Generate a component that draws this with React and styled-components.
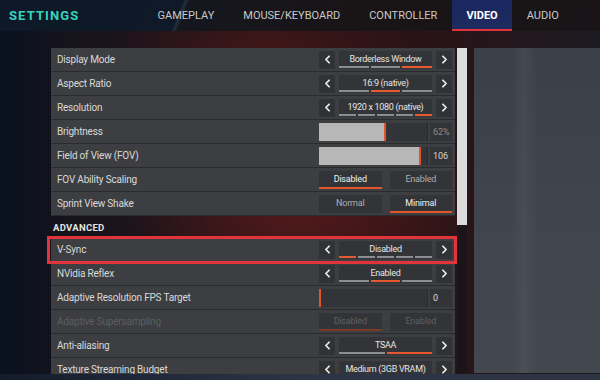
import React from "react";
import styled, { createGlobalStyle, css } from "styled-components";
import { ChevronLeft, ChevronRight } from "lucide-react";

const GlobalStyle = createGlobalStyle`
  html, body {
    margin: 0;
    padding: 0;
    background: #0b0f1a;
  }
  * {
    box-sizing: border-box;
  }
`;

const Page = styled.div`
  position: relative;
  width: 600px;
  height: 380px;
  overflow: hidden;
  font-family: Roboto, "Liberation Sans", sans-serif;
  background:
    radial-gradient(ellipse 260px 160px at 300px 200px, rgba(120, 30, 30, 0.55), transparent 70%),
    radial-gradient(ellipse 220px 120px at 260px 60px, rgba(90, 25, 25, 0.5), transparent 70%),
    linear-gradient(90deg, #0a1120 0%, #14131c 10%, #2a1417 45%, #2a1316 70%, #1c1a22 100%);
  display: flex;
  flex-direction: column;
`;

const Header = styled.div`
  height: 31px;
  flex-shrink: 0;
  display: flex;
  align-items: stretch;
  background: linear-gradient(
    112deg,
    #0d1928 0%,
    #0f1927 30%,
    #22303e 30.4%,
    #15171e 31%,
    #191416 60%,
    #181417 100%
  );
`;

const Title = styled.div`
  width: 143px;
  padding-left: 9px;
  display: flex;
  align-items: center;
  color: #36d3bd;
  font-weight: 700;
  font-size: 13px;
  letter-spacing: 1.1px;
`;

const Tab = styled.div`
  position: relative;
  display: flex;
  align-items: center;
  justify-content: center;
  padding: 0 14.5px;
  color: ${(p) => (p.$active ? "#ffffff" : "#c9c9c9")};
  font-size: 11px;
  font-weight: ${(p) => (p.$active ? 700 : 400)};
  letter-spacing: 0;
  ${(p) =>
    p.$active &&
    css`
      background: linear-gradient(180deg, #1b2760 0%, #1d2b5e 100%);
      &::after {
        content: "";
        position: absolute;
        left: 0;
        right: 0;
        bottom: 0;
        height: 2px;
        background: #e2323c;
      }
    `}
`;

const Body = styled.div`
  flex: 1;
  display: flex;
  padding: 17px 0 0 47px;
`;

const List = styled.div`
  width: 410px;
  height: 326px;
  padding: 0 2px 0 4px;
  overflow: hidden;
  display: flex;
  flex-direction: column;
`;

const Row = styled.div`
  position: relative;
  height: 24px;
  flex-shrink: 0;
  display: flex;
  align-items: center;
  justify-content: space-between;
  padding: 0 3px 0 6px;
  background: #3d3e41;
  border-bottom: 1px solid #2b2b2e;
  ${(p) =>
    p.$highlight &&
    css`
      z-index: 1;
      &::before {
        content: "";
        position: absolute;
        left: -4px;
        right: -2px;
        top: -2px;
        bottom: -3px;
        border: 3px solid #e3343b;
        pointer-events: none;
      }
    `}
`;

const Label = styled.div`
  color: ${(p) => (p.$disabled ? "#5c5d60" : "#d9d9d9")};
  font-size: 10px;
  letter-spacing: -0.2px;
`;

const Section = styled.div`
  height: 22px;
  flex-shrink: 0;
  display: flex;
  align-items: center;
  color: #e4e4e4;
  font-size: 9.5px;
  font-weight: 700;
  letter-spacing: 0.3px;
  padding-left: 2px;
`;

const Control = styled.div`
  width: 133px;
  height: 18px;
  display: flex;
  gap: ${(p) => p.$gap ?? 4}px;
`;

const ArrowBox = styled.div`
  width: 16px;
  flex-shrink: 0;
  background: #313236;
  display: flex;
  align-items: center;
  justify-content: center;
  color: #eeeeee;
`;

const ValueBox = styled.div`
  position: relative;
  flex: 1;
  background: #333438;
  display: flex;
  align-items: center;
  justify-content: center;
  padding-bottom: 2px;
  color: #e6e6e6;
  font-size: 9px;
  letter-spacing: -0.3px;
`;

const Segments = styled.div`
  position: absolute;
  left: 0;
  right: 0;
  bottom: 1px;
  display: flex;
  gap: 2px;
`;

const Segment = styled.div`
  flex: 1;
  height: 1.5px;
  background: ${(p) => (p.$on ? "#e55a2f" : "#8d8e91")};
`;

const Track = styled.div`
  flex: 1;
  display: flex;
  background: #333437;
  border-right: 1px solid #2a2a2d;
`;

const Fill = styled.div`
  height: 100%;
  background: #b7b7b7;
  border-right: 2px solid #e2542a;
  min-width: 2px;
`;

const SliderValue = styled.div`
  width: 22px;
  flex-shrink: 0;
  background: #333437;
  display: flex;
  align-items: center;
  padding-left: 3px;
  color: ${(p) => (p.$dim ? "#8b8b8e" : "#d6d6d6")};
  font-size: 9px;
`;

const ToggleGroup = styled.div`
  width: 133px;
  height: 18px;
  display: flex;
  gap: 8px;
`;

const ToggleButton = styled.div`
  flex: 1;
  display: flex;
  align-items: center;
  justify-content: center;
  background: #333437;
  font-size: 9px;
  letter-spacing: -0.2px;
  color: ${(p) =>
    p.$disabled ? "#5f5f62" : p.$on ? "#f0f0f0" : "#aeaeb1"};
  border-bottom: 2px solid
    ${(p) =>
      p.$on ? (p.$disabled ? "#7a3a26" : "#e2542a") : "transparent"};
`;

const Scrollbar = styled.div`
  width: 10px;
  height: 325px;
  background: #1b1418;
  display: flex;
  flex-direction: column;
`;

const Thumb = styled.div`
  height: 177px;
  background: #dcdcdd;
`;

const SidePanel = styled.div`
  margin-left: 7px;
  flex: 1;
  height: 325px;
  background:
    linear-gradient(90deg, transparent 30%, rgba(120, 135, 160, 0.12) 40%, transparent 50%),
    linear-gradient(180deg, #3b4048 0%, #41464e 60%, #43474e 100%);
`;

const BottomStrip = styled.div`
  position: absolute;
  left: 0;
  right: 0;
  bottom: 0;
  height: 6px;
  background: linear-gradient(90deg, #141c2c, #2c3446 50%, #2e3444);
`;

const Selector = ({ value, count, active }) => (
  <Control>
    <ArrowBox>
      <ChevronLeft size={13} strokeWidth={3.2} />
    </ArrowBox>
    <ValueBox>
      {value}
      <Segments>
        {Array.from({ length: count }).map((_, i) => (
          <Segment key={i} $on={i === active} />
        ))}
      </Segments>
    </ValueBox>
    <ArrowBox>
      <ChevronRight size={13} strokeWidth={3.2} />
    </ArrowBox>
  </Control>
);

const Slider = ({ percent, value, dim }) => (
  <Control $gap={2}>
    <Track>
      <Fill style={{ width: `${percent}%` }} />
    </Track>
    <SliderValue $dim={dim}>{value}</SliderValue>
  </Control>
);

const Toggle = ({ options, active, disabled }) => (
  <ToggleGroup>
    {options.map((o, i) => (
      <ToggleButton key={o} $on={i === active} $disabled={disabled}>
        {o}
      </ToggleButton>
    ))}
  </ToggleGroup>
);

const basic = [
  { label: "Display Mode", kind: "select", value: "Borderless Window", count: 3, active: 2 },
  { label: "Aspect Ratio", kind: "select", value: "16:9 (native)", count: 3, active: 1 },
  { label: "Resolution", kind: "select", value: "1920 x 1080 (native)", count: 5, active: 4 },
  { label: "Brightness", kind: "slider", percent: 62, value: "62%", dim: true },
  { label: "Field of View (FOV)", kind: "slider", percent: 94, value: "106" },
  { label: "FOV Ability Scaling", kind: "toggle", options: ["Disabled", "Enabled"], active: 0 },
  { label: "Sprint View Shake", kind: "toggle", options: ["Normal", "Minimal"], active: 1 },
];

const advanced = [
  { label: "V-Sync", kind: "select", value: "Disabled", count: 5, active: 0, highlight: true },
  { label: "NVidia Reflex", kind: "select", value: "Enabled", count: 3, active: 1 },
  { label: "Adaptive Resolution FPS Target", kind: "slider", percent: 0, value: "0" },
  { label: "Adaptive Supersampling", kind: "toggle", options: ["Disabled", "Enabled"], active: 0, disabled: true },
  { label: "Anti-aliasing", kind: "select", value: "TSAA", count: 2, active: 1 },
  { label: "Texture Streaming Budget", kind: "select", value: "Medium (3GB VRAM)", count: 5, active: 2 },
];

const renderRow = (r) => (
  <Row key={r.label} $highlight={r.highlight}>
    <Label $disabled={r.disabled}>{r.label}</Label>
    {r.kind === "select" && <Selector value={r.value} count={r.count} active={r.active} />}
    {r.kind === "slider" && <Slider percent={r.percent} value={r.value} dim={r.dim} />}
    {r.kind === "toggle" && (
      <Toggle options={r.options} active={r.active} disabled={r.disabled} />
    )}
  </Row>
);

export default function App() {
  return (
    <>
      <GlobalStyle />
      <Page>
        <Header>
          <Title>SETTINGS</Title>
          <Tab>GAMEPLAY</Tab>
          <Tab>MOUSE/KEYBOARD</Tab>
          <Tab>CONTROLLER</Tab>
          <Tab $active>VIDEO</Tab>
          <Tab>AUDIO</Tab>
        </Header>
        <Body>
          <List>
            {basic.map(renderRow)}
            <Section>ADVANCED</Section>
            {advanced.map(renderRow)}
          </List>
          <Scrollbar>
            <Thumb />
          </Scrollbar>
          <SidePanel />
        </Body>
        <BottomStrip />
      </Page>
    </>
  );
}
